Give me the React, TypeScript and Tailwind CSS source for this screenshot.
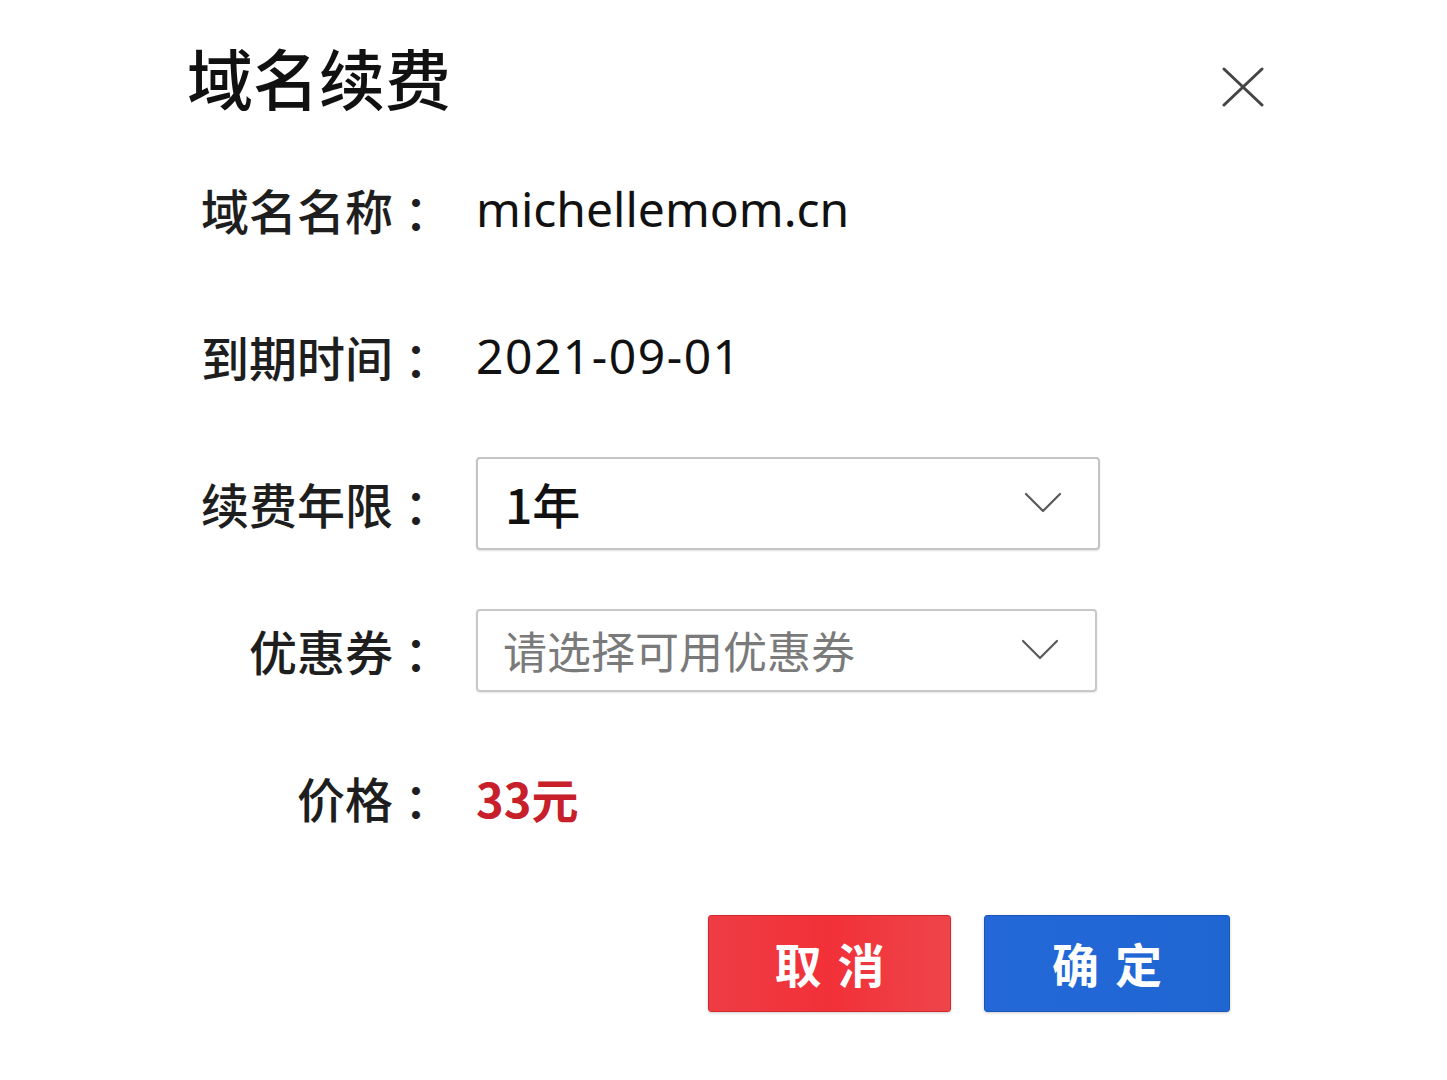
const font = { fontFamily: '"Noto Sans CJK SC", "Noto Sans", sans-serif' };
const latin = { fontFamily: '"Noto Sans", "Open Sans", sans-serif' };

function Chevron() {
  return (
    <svg width="38" height="22" viewBox="0 0 38 22" fill="none" className="shrink-0">
      <polyline points="2,2 19,19 36,2" stroke="#5a5a5a" strokeWidth="2.2" strokeLinecap="round" strokeLinejoin="round" />
    </svg>
  );
}

function Row({ label, children }: { label: string; children: React.ReactNode }) {
  return (
    <div className="flex h-[120px] items-center">
      <div className="flex w-[276px] shrink-0 justify-end text-[48px] font-medium leading-none text-[#1e1e1e]">
        <span>{label}</span>
        <span className="w-[83px] pl-[11px]">：</span>
      </div>
      <div className="flex items-center">{children}</div>
    </div>
  );
}

export default function App() {
  return (
    <div className="min-h-[1080px] w-full bg-white" style={font}>
      <div className="w-[1447px] pl-[187px] pt-[36px]">
        <div className="flex w-[1076px] items-center justify-between">
          <h1 className="text-[66px] font-medium leading-[80px] text-[#111]">域名续费</h1>
          <svg width="42" height="40" viewBox="0 0 42 40" className="mt-[22px] mr-[-1px]">
            <line x1="2" y1="2" x2="40" y2="38" stroke="#444" strokeWidth="3" strokeLinecap="round" />
            <line x1="40" y1="2" x2="2" y2="38" stroke="#444" strokeWidth="3" strokeLinecap="round" />
          </svg>
        </div>

        <div className="mt-[33px] flex flex-col gap-[27px] pl-[13px]">
          <Row label="域名名称">
            <span className="text-[48px] leading-none text-[#111]" style={latin}>
              michellemom.cn
            </span>
          </Row>
          <Row label="到期时间">
            <span className="text-[48px] leading-none tracking-[1.5px] text-[#111]" style={latin}>
              2021-09-01
            </span>
          </Row>
          <Row label="续费年限">
            <div className="flex h-[93px] w-[624px] items-center justify-between rounded-[4px] border-2 border-[#c4c4c4] pl-[27px] pr-[36px] shadow-[0_1px_2px_rgba(0,0,0,0.12)]">
              <span className="text-[48px] font-medium leading-none text-[#111]">1年</span>
              <Chevron />
            </div>
          </Row>
          <Row label="优惠券">
            <div className="flex h-[83px] w-[621px] items-center justify-between rounded-[4px] border-2 border-[#c8c8c8] pl-[25px] pr-[36px] shadow-[0_1px_2px_rgba(0,0,0,0.1)]">
              <span className="text-[44px] leading-none text-[#7a7a7a]">请选择可用优惠券</span>
              <Chevron />
            </div>
          </Row>
          <Row label="价格">
            <span className="text-[47px] font-bold leading-none text-[#c8202b]">33元</span>
          </Row>
        </div>

        <div className="mt-[58px] flex gap-[33px] pl-[521px]">
          <button className="flex h-[97px] w-[243px] items-center justify-center gap-[16px] rounded-[3px] border border-[#d12a2f] bg-gradient-to-r from-[#ee3c44] via-[#f23038] to-[#ee444a] text-[47px] font-bold text-white shadow-[0_1px_3px_rgba(0,0,0,0.2)]">
            <span>取</span>
            <span>消</span>
          </button>
          <button className="flex h-[97px] w-[246px] items-center justify-center gap-[16px] rounded-[3px] border border-[#1a58b8] bg-gradient-to-r from-[#2468d8] to-[#1f66d2] text-[47px] font-bold text-white shadow-[0_1px_3px_rgba(0,0,0,0.2)]">
            <span>确</span>
            <span>定</span>
          </button>
        </div>
      </div>
    </div>
  );
}
